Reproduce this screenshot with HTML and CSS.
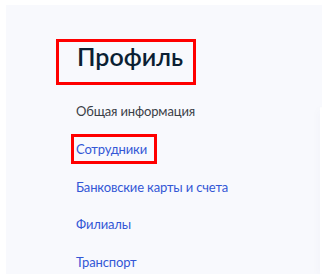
FILE: index.html
```html
<!DOCTYPE html>
<html lang="ru">
<head>
  <meta charset="UTF-8">
  <meta name="viewport" content="width=device-width, initial-scale=1.0">
  <title>Профиль</title>
  <link rel="stylesheet" href="styles.css">
</head>
<body>
  <div class="page">
    <aside class="sidebar">
      <h1 class="title">Профиль</h1>
      <nav class="menu">
        <span class="menu-item current">Общая информация</span>
        <a class="menu-item marked" href="#">Сотрудники</a>
        <a class="menu-item" href="#">Банковские карты и счета</a>
        <a class="menu-item" href="#">Филиалы</a>
        <a class="menu-item" href="#">Транспорт</a>
      </nav>
    </aside>
    <div class="card"></div>
  </div>
</body>
</html>
```

FILE: styles.css
```css
:root {
  --panel-color: #f8f9fd;
  --text-color: #0b1f33;
  --muted-color: #3b3f47;
  --link-color: #3357d6;
  --mark-color: #ff0000;
}

* {
  box-sizing: border-box;
  margin: 0;
  padding: 0;
}

html, body {
  height: 100%;
}

body {
  font-family: Lato, 'Liberation Sans', sans-serif;
  background-color: #fff;
  overflow: hidden;
  padding: 5px 0 0 6px;
}

.page {
  display: flex;
  height: 100%;
  background-color: var(--panel-color);
}

.sidebar {
  width: 314px;
  flex-shrink: 0;
  padding: 34px 0 0 50px;
}

.title {
  width: 140px;
  height: 46px;
  border: 3px solid var(--mark-color);
  padding-left: 18px;
  font-size: 25px;
  line-height: 28px;
  font-weight: 600;
  color: var(--text-color);
}

.menu {
  display: flex;
  flex-direction: column;
  align-items: flex-start;
  gap: 17.75px;
  padding: 16px 0 0 20px;
}

.menu-item {
  font-size: 13px;
  letter-spacing: -0.15px;
  line-height: 20px;
  color: var(--link-color);
  text-decoration: none;
}

.menu-item.current {
  color: var(--muted-color);
}

.menu-item.marked {
  padding-right: 5px;
  outline: 3px solid var(--mark-color);
  outline-offset: 2px;
}

.card {
  margin-top: 102px;
  width: 200px;
  background-color: #fff;
  border-radius: 6px;
  box-shadow: 0 2px 8px rgba(40, 60, 120, 0.08);
}
```
